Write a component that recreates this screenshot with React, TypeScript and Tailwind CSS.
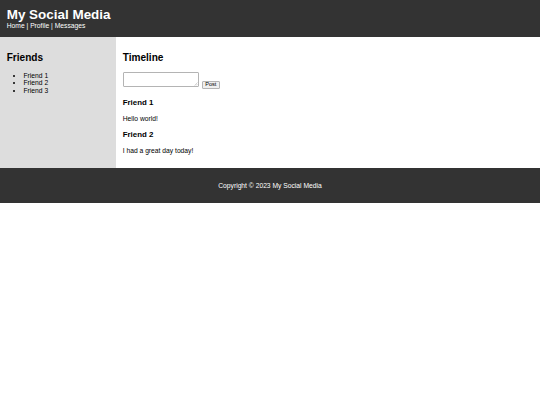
const friends = ["Friend 1", "Friend 2", "Friend 3"];

const posts = [
  { author: "Friend 1", text: "Hello world!" },
  { author: "Friend 2", text: "I had a great day today!" },
];

export default function App() {
  return (
    <div className="font-['Liberation_Sans',Arial,sans-serif] text-[6.72px] leading-[1.149] text-black bg-white min-h-[405px]">
      <header className="bg-[#333] text-white p-[6.72px]">
        <h1 className="text-[13.44px] font-bold leading-[1.149]">My Social Media</h1>
        <nav>
          <a className="text-white">Home</a> | <a className="text-white">Profile</a> |{" "}
          <a className="text-white">Messages</a>
        </nav>
      </header>

      <div className="flex">
        <aside className="w-[116px] shrink-0 bg-[#ddd] p-[6.72px]">
          <h2 className="text-[10.08px] font-bold leading-[1.149] mt-[8.37px] mb-[8.37px]">Friends</h2>
          <ul className="list-disc pl-[16.8px]">
            {friends.map((f) => (
              <li key={f}>{f}</li>
            ))}
          </ul>
        </aside>

        <main className="flex-1 p-[6.72px]">
          <h2 className="text-[10.08px] font-bold leading-[1.149] mt-[8.37px] mb-[8.37px]">Timeline</h2>
          <form className="flex items-start h-[18.5px]" onSubmit={(e) => e.preventDefault()}>
            <div className="relative">
              <textarea className="block w-[76.5px] h-[15.3px] border border-[#b4b4b4] rounded-[1px] resize-none bg-white text-[5.6px] p-[1px]" />
              <svg
                className="absolute right-[1px] bottom-[1px]"
                width="4"
                height="4"
                viewBox="0 0 4 4"
              >
                <path d="M0.5 3.5 L3.5 0.5 M2 3.5 L3.5 2" stroke="#aaa" strokeWidth="0.5" />
              </svg>
            </div>
            <button
              type="submit"
              className="ml-[2.5px] mt-[9.4px] h-[7.6px] px-[2.5px] text-[5.6px] leading-none border border-[#b4b4b4] rounded-[1px] bg-[#efefef] text-black"
            >
              Post
            </button>
          </form>
          {posts.map((p) => (
            <div key={p.author}>
              <h3 className="text-[7.86px] font-bold leading-[1.149] mt-[7.86px] mb-[7.86px]">{p.author}</h3>
              <p className="my-[6.72px]">{p.text}</p>
            </div>
          ))}
        </main>
      </div>

      <footer className="bg-[#333] text-white text-center p-[6.72px]">
        <p className="my-[6.72px]">Copyright © 2023 My Social Media</p>
      </footer>
    </div>
  );
}
